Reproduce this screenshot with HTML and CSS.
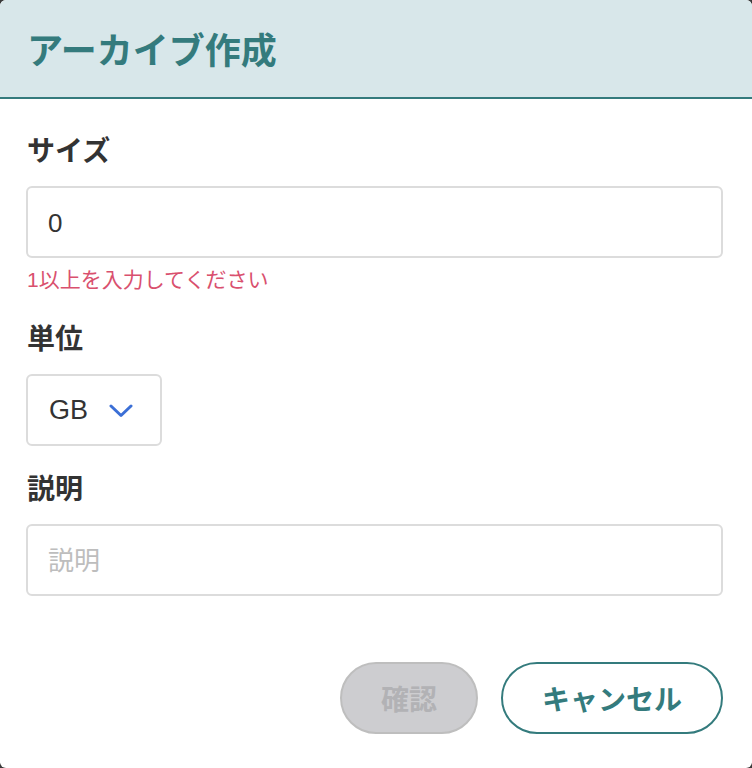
FILE: index.html
```html
<!DOCTYPE html>
<html lang="ja">
<head>
<meta charset="utf-8">
<title>アーカイブ作成</title>
<link rel="stylesheet" href="styles.css">
</head>
<body>
<div class="modal">
  <header class="modal-header">
    <h1 class="modal-title">アーカイブ作成</h1>
  </header>
  <div class="modal-body">
    <div class="field">
      <label class="field-label" for="size">サイズ</label>
      <input class="text-input" id="size" type="text" value="0">
      <p class="field-error">1以上を入力してください</p>
    </div>
    <div class="field field-unit">
      <label class="field-label">単位</label>
      <div class="select-box">
        <span class="select-value">GB</span>
        <svg class="select-chevron" width="24" height="14" viewBox="0 0 24 14" aria-hidden="true">
          <path d="M2 2 L12 11.5 L22 2" fill="none" stroke="#3b6fd6" stroke-width="3" stroke-linecap="round" stroke-linejoin="round"/>
        </svg>
      </div>
    </div>
    <div class="field field-desc">
      <label class="field-label" for="desc">説明</label>
      <input class="text-input" id="desc" type="text" placeholder="説明">
    </div>
    <div class="actions">
      <button class="btn btn-disabled" type="button" disabled>確認</button>
      <button class="btn btn-outline" type="button">キャンセル</button>
    </div>
  </div>
</div>
</body>
</html>
```
FILE: styles.css
```css
* { box-sizing: border-box; }
html, body { margin: 0; padding: 0; }
body {
  background: #3a3a3a;
  font-family: "Liberation Sans", "Noto Sans CJK JP", sans-serif;
  color: #333;
}
.modal {
  width: 752px;
  height: 768px;
  background: #fff;
  border-radius: 6px;
  overflow: hidden;
}
.modal-header {
  height: 99px;
  background: #d8e7ea;
  border-bottom: 2px solid #347b7d;
  display: flex;
  align-items: center;
  padding: 0 0 0 27px;
}
.modal-title {
  margin: 0;
  font-family: "Noto Sans CJK JP", sans-serif;
  font-size: 36px;
  font-weight: 700;
  color: #347b7d;
  line-height: 40px;
  padding-bottom: 2px;
}
.modal-body {
  padding: 32px 29px 0 26px;
}
.field {
  display: flex;
  flex-direction: column;
  align-items: flex-start;
}
.field-label {
  font-family: "Noto Sans CJK JP", sans-serif;
  font-size: 28px;
  font-weight: 700;
  line-height: 36px;
  color: #333;
  margin: 0 0 19px 1px;
}
.text-input {
  width: 697px;
  height: 72px;
  border: 2px solid #dcdcdc;
  border-radius: 6px;
  padding: 2px 20px 0;
  font-family: "Liberation Sans", "Noto Sans CJK JP", sans-serif;
  font-size: 26px;
  color: #333;
  background: #fff;
  outline: none;
}
.text-input::placeholder {
  color: #bdbdbd;
}
.field-error {
  margin: 8px 0 0 1px;
  font-size: 21px;
  line-height: 28px;
  color: #d9506e;
}
.field-unit { margin-top: 25px; }
.field-desc { margin-top: 23px; }
.select-box {
  width: 136px;
  height: 72px;
  border: 2px solid #dcdcdc;
  border-radius: 6px;
  display: flex;
  align-items: center;
  padding: 0 0 0 21px;
  gap: 21px;
}
.select-value {
  font-size: 27px;
  color: #333;
}
.select-chevron { display: block; margin-top: 2px; }
.actions {
  margin-top: 66px;
  display: flex;
  justify-content: flex-end;
  gap: 23px;
}
.btn {
  height: 72px;
  border-radius: 36px;
  font-family: "Noto Sans CJK JP", sans-serif;
  font-size: 28px;
  font-weight: 700;
  padding: 0;
  cursor: pointer;
}
.btn-disabled {
  width: 138px;
  background: #cdcdd0;
  border: 2px solid #bebebe;
  color: #b2b2b5;
  cursor: default;
}
.btn-outline {
  width: 222px;
  background: #fff;
  border: 2px solid #347b7d;
  color: #347b7d;
}
```
